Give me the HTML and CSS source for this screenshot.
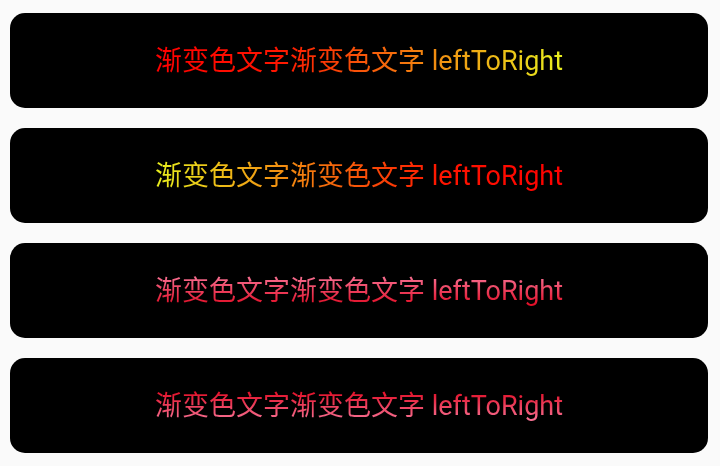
FILE: index.html
```html
<!DOCTYPE html>
<html>
<head>
<meta charset="utf-8">
<link rel="stylesheet" href="styles.css">
</head>
<body>
<div class="list">
  <div class="card"><span class="txt g1">渐变色文字渐变色文字 leftToRight</span></div>
  <div class="card"><span class="txt g2">渐变色文字渐变色文字 leftToRight</span></div>
  <div class="card"><span class="txt g3">渐变色文字渐变色文字 leftToRight</span></div>
  <div class="card"><span class="txt g4">渐变色文字渐变色文字 leftToRight</span></div>
</div>
</body>
</html>
```
FILE: styles.css
```css
html, body {
  margin: 0;
  padding: 0;
  background: #fafafa;
  width: 720px;
  height: 466px;
  overflow: hidden;
}
.list {
  display: flex;
  flex-direction: column;
  gap: 20px;
  padding: 13px 12px 0 10px;
}
.card {
  height: 95px;
  background: #000;
  border-radius: 15px;
  display: flex;
  align-items: center;
  justify-content: center;
}
.txt {
  font-family: Roboto, "Noto Sans CJK SC", sans-serif;
  font-size: 27px;
  line-height: 30px;
  color: transparent;
  -webkit-background-clip: text;
  background-clip: text;
  padding-top: 1px;
}
.g1 { background-image: linear-gradient(to right, #ff0000 0%, #ff1500 30%, #e8ef1e 100%); }
.g2 { background-image: linear-gradient(to right, #e8ef1e 0%, #ff1500 70%, #ff0000 100%); }
.g3 { background-image: linear-gradient(to bottom, #f87496, #e00a22); }
.g4 { background-image: linear-gradient(to bottom, #e00a22, #f87496); }
```
